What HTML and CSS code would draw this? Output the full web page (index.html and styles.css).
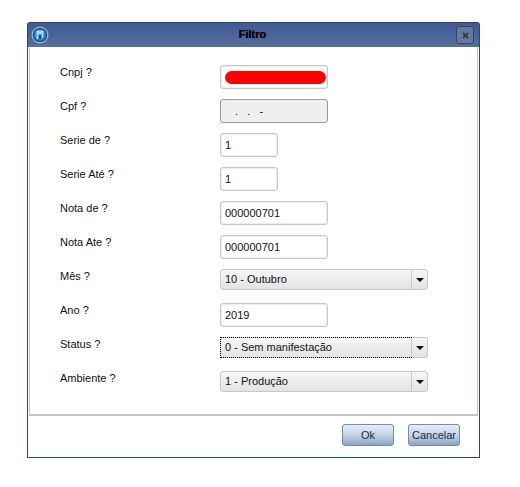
FILE: index.html
```html
<!DOCTYPE html>
<html lang="pt-BR">
<head>
    <meta charset="UTF-8">
    <title>Filtro</title>
    <link rel="stylesheet" href="styles.css">
</head>
<body>
    <div class="window">
        <div class="titlebar">
            <div class="app-icon">
                <svg width="18" height="18" viewBox="0 0 18 18">
                    <circle cx="9" cy="9" r="8.500" fill="#aab6c6"/>
                    <circle cx="9" cy="9" r="7.300" fill="#14578f"/>
                    <circle cx="9" cy="9" r="5.800" fill="#2a86cf"/>
                    <path d="M5.500 4.500h7v6.500l-2 2h-5z" fill="#a9d6f2"/>
                    <path d="M7.500 8.500h3v4.500h-3z" fill="#14578f"/>
                </svg>
            </div>
            <div class="title">Filtro</div>
            <div class="close">
                <svg width="7" height="7" viewBox="0 0 7 7">
                    <path d="M1 1l5 5M6 1l-5 5" stroke="#343a46" stroke-width="1.800"/>
                </svg>
            </div>
        </div>
        <div class="panel">
            <div class="row">
                <label>Cnpj ?</label>
                <div class="field w-md"><span class="redacted"></span></div>
            </div>
            <div class="row">
                <label>Cpf ?</label>
                <div class="field w-md disabled"><span class="mask">.&nbsp;&nbsp;&nbsp;.&nbsp;&nbsp;&nbsp;-</span></div>
            </div>
            <div class="row">
                <label>Serie de ?</label>
                <div class="field w-sm">1</div>
            </div>
            <div class="row">
                <label>Serie Até ?</label>
                <div class="field w-sm">1</div>
            </div>
            <div class="row">
                <label>Nota de ?</label>
                <div class="field w-md">000000701</div>
            </div>
            <div class="row">
                <label>Nota Ate ?</label>
                <div class="field w-md">000000701</div>
            </div>
            <div class="row">
                <label>Mês ?</label>
                <div class="combo">
                    <div class="combo-text">10 - Outubro</div>
                    <div class="combo-arrow"></div>
                </div>
            </div>
            <div class="row">
                <label>Ano ?</label>
                <div class="field w-md">2019</div>
            </div>
            <div class="row">
                <label>Status ?</label>
                <div class="combo">
                    <div class="combo-text focused">0 - Sem manifestação</div>
                    <div class="combo-arrow"></div>
                </div>
            </div>
            <div class="row">
                <label>Ambiente ?</label>
                <div class="combo">
                    <div class="combo-text">1 - Produção</div>
                    <div class="combo-arrow"></div>
                </div>
            </div>
        </div>
        <div class="footer">
            <button class="btn">Ok</button>
            <button class="btn">Cancelar</button>
        </div>
    </div>
</body>
</html>
```

FILE: styles.css
```css
* {
    box-sizing: border-box;
}
body {
    margin: 0;
    padding: 22px 0 0 27px;
    background: #fff;
    font-family: "Liberation Sans", Arial, sans-serif;
    font-size: 11px;
    color: #111;
}
.window {
    width: 453px;
    height: 436px;
    display: flex;
    flex-direction: column;
    background: #fff;
    border: 1px solid #1f4a7c;
    border-top-color: #3a4250;
    border-radius: 3px 3px 0 0;
}
.titlebar {
    height: 24px;
    display: flex;
    align-items: center;
    padding: 0 5px 0 3px;
    background: linear-gradient(to bottom, #3f5a92, #566f9f);
}
.app-icon {
    width: 18px;
    height: 18px;
}
.title {
    flex: 1;
    padding-bottom: 2px;
    text-align: center;
    font-weight: bold;
    font-size: 11px;
    color: #000;
    text-shadow: 0 0 1px #1a2440;
}
.close {
    width: 18px;
    height: 18px;
    display: flex;
    align-items: center;
    justify-content: center;
    background: #64799f;
    border: 1px solid #2f4470;
    border-radius: 3px;
}
.panel {
    height: 369px;
    margin: 0 1px;
    padding-top: 18px;
    background: #fff;
    border: 1px solid #c4c4c4;
    border-top: 0;
    border-width: 0 1px 2px 1px;
}
.row {
    height: 34px;
    display: flex;
    align-items: flex-start;
}
.row label {
    width: 160px;
    margin-left: 30px;
    padding-top: 1px;
}
.field {
    height: 24px;
    padding-left: 4px;
    line-height: 23px;
    background: #fff;
    border: 1px solid #c8c8c8;
    border-radius: 3px;
    box-shadow: 0 0 0 1px #eee inset;
}
.w-md {
    width: 108px;
}
.w-sm {
    width: 58px;
}
.disabled {
    background: #efefef;
    border-color: #9a9a9a;
}
.mask {
    padding-left: 10px;
}
.redacted {
    display: block;
    width: 101px;
    height: 13px;
    margin-top: 5px;
    background: #f00;
    border-radius: 7px;
}
.combo {
    width: 208px;
    height: 21px;
    display: flex;
    border: 1px solid #c8c8c8;
    border-radius: 3px;
    background: linear-gradient(to bottom, #f6f6f6, #e3e3e3);
}
.combo-text {
    flex: 1;
    padding-left: 4px;
    line-height: 18px;
}
.combo-text.focused {
    outline: 1px dotted #000;
}
.combo-arrow {
    width: 16px;
    display: flex;
    align-items: center;
    justify-content: center;
    border-left: 1px solid #c8c8c8;
}
.combo-arrow::after {
    content: "";
    border-left: 4px solid transparent;
    border-right: 4px solid transparent;
    border-top: 4px solid #111;
}
.footer {
    flex: 1;
    display: flex;
    justify-content: flex-end;
    gap: 14px;
    padding: 8px 19px 0 0;
}
.btn {
    width: 52px;
    height: 22px;
    padding: 0;
    font-family: "Liberation Sans", Arial, sans-serif;
    font-size: 11px;
    color: #1a2a40;
    background: linear-gradient(to bottom, #e6edf6, #c6d4e6 50%, #8ba5c6);
    border: 1px solid #6f8db4;
    border-radius: 3px;
}
```
